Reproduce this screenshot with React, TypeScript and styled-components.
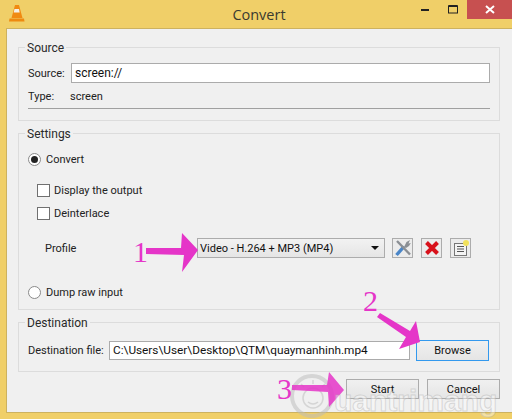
import React from "react";
import styled, { createGlobalStyle } from "styled-components";

const Global = createGlobalStyle`
  html, body { margin: 0; padding: 0; background: #f0f0f0; }
  body { width: 512px; height: 419px; overflow: hidden; font-family: Roboto, "Open Sans", sans-serif; font-size: 11px; color: #222; }
`;
const Win = styled.div`
  position: relative; width: 512px; height: 419px; background: #f0cf68; overflow: hidden; box-sizing: border-box;
  display: flex; flex-direction: column;
`;
const TitleBar = styled.div`
  height: 28px; flex: none; position: relative; display: flex; align-items: center; justify-content: center;
  font-family: "Open Sans", sans-serif; font-size: 14.5px; color: #3a3a30; padding-left: 6px; box-sizing: border-box;
`;
const TitleIcon = styled.svg`position: absolute; left: 9px; top: 4px; width: 16px; height: 18px;`;
const WinButtons = styled.div`position: absolute; right: 0; top: 0; display: flex; align-items: flex-start;`;
const WinBtn = styled.div`
  width: ${p => p.$w}px; height: 19px; display: flex; align-items: center; justify-content: center;
  background: ${p => p.$close ? "#c75050" : "transparent"};
`;
const Body = styled.div`
  margin-left: 6px; width: 506px; height: 385px; background: #f0f0f0; box-sizing: border-box;
  border-top: 1px solid #cdb25f; border-left: 1px solid #cdb25f; border-bottom: 1px solid #cdb25f;
  padding: 9px 12px 0 11px; display: flex; flex-direction: column;
`;
const Group = styled.fieldset`
  margin: 0; padding: 0; border: 1px solid #dcdcdc; height: ${p => p.$h}px; box-sizing: border-box; margin-bottom: ${p => p.$mb}px;
  position: relative; display: flex; flex-direction: column;
`;
const Legend = styled.legend`
  margin-left: 6px; padding: 2px 2px 0; font-size: 12px; line-height: 16px; color: #2a2a2a;
`;
const Row = styled.div`display: flex; align-items: center; height: ${p => p.$h || 20}px; padding-left: ${p => p.$pl || 9}px; margin-top: ${p => p.$mt || 0}px; padding-right: 9px;`;
const Label = styled.span`width: ${p => p.$w}px; flex: none; white-space: nowrap;`;
const Input = styled.div`
  flex: ${p => p.$w ? "none" : 1}; width: ${p => p.$w ? p.$w + "px" : "auto"}; height: ${p => p.$h || 20}px; background: #fff; border: 1px solid #ababab; box-sizing: border-box; padding-left: 3px;
  line-height: ${p => (p.$h || 20) - 2}px; font-size: ${p => p.$fs || 12}px; white-space: nowrap; overflow: hidden; color: #111;
`;
const Sep = styled.div`height: 1px; background: #a0a0a0; margin: 2px 9px 0 9px;`;
const Radio = styled.span`
  width: 11px; height: 11px; border-radius: 50%; border: 1px solid #8a8a8a; background: #fff; margin-right: 5px; flex: none; display: flex; align-items: center; justify-content: center;
  &::after { content: ""; display: ${p => p.$on ? "block" : "none"}; width: 7px; height: 7px; border-radius: 50%; background: #222; }
`;
const Check = styled.span`width: 11px; height: 11px; border: 1px solid #707070; background: #fff; margin-right: 4px; flex: none;`;
const Combo = styled.div`
  width: 188px; height: 20px; box-sizing: border-box; border: 1px solid #acacac; background: linear-gradient(#f2f2f2, #e5e5e5);
  display: flex; align-items: center; padding: 0 5px 0 2px; justify-content: space-between; color: #111; white-space: nowrap; flex: none;
`;
const Caret = styled.span`width: 0; height: 0; border-left: 4px solid transparent; border-right: 4px solid transparent; border-top: 4px solid #111;`;
const ToolBtn = styled.div`
  width: 21px; height: 20px; box-sizing: border-box; border: 1px solid #acacac; background: #ececec; margin-left: ${p => p.$ml}px; display: flex; align-items: center; justify-content: center; flex: none;
`;
const Btn = styled.div`
  width: 73px; height: ${p => p.$h || 21}px; box-sizing: border-box; border: 1px solid ${p => p.$focus ? "#3399ee" : "#acacac"}; background: linear-gradient(#f0f0f0, #e5e5e5);
  display: flex; align-items: center; justify-content: center; color: #111; flex: none; margin-left: ${p => p.$ml || 0}px;
`;
const Footer = styled.div`display: flex; justify-content: flex-end; margin-top: 7px;`;
const Overlay = styled.svg`position: absolute; left: 0; top: 0; width: 512px; height: 419px; pointer-events: none;`;
const Num = styled.span`
  position: absolute; left: ${p => p.$x}px; top: ${p => p.$y}px; font-family: "Liberation Serif", serif; font-size: 30px; line-height: 30px; color: #e535c8;
`;
const Mark = styled.span`
  position: absolute; left: 334px; top: 386px; font-family: "Liberation Sans", sans-serif; font-weight: 700; font-size: 30px; line-height: 30px;
  color: rgba(255,255,255,.4); -webkit-text-stroke: 1px rgba(170,170,170,.4); white-space: nowrap;
`;

export default function App() {
  return (
    <Win>
      <Global />
      <TitleBar>
        <TitleIcon viewBox="0 0 16 18">
          <path d="M6 1 L10 1 L13.5 14 L2.5 14Z" fill="#f08a12" />
          <path d="M5.5 5 L10 5 L10.7 8.5 L4.7 8.5Z" fill="#f5f0e6" />
          <path d="M0.5 14.5 H15 L15.5 17.5 H0Z" fill="#ee8a10" />
        </TitleIcon>
        Convert
        <WinButtons>
          <WinBtn $w={27}><svg width="9" height="3"><rect width="8" height="2" y="1" fill="#222" /></svg></WinBtn>
          <WinBtn $w={28}><svg width="11" height="9"><rect x=".5" y="1" width="9" height="7" fill="none" stroke="#222" /><rect x=".5" y="0" width="9" height="2" fill="#222" /></svg></WinBtn>
          <WinBtn $w={45} $close><svg width="10" height="9"><path d="M1 1 L9 8 M9 1 L1 8" stroke="#fff" strokeWidth="2" /></svg></WinBtn>
        </WinButtons>
      </TitleBar>
      <Body>
        <Group $h={83} $mb={3}>
          <Legend>Source</Legend>
          <Row $mt={7}><Label $w={43}>Source:</Label><Input>screen://</Input></Row>
          <Row $mt={3}><Label $w={42}>Type:</Label>screen</Row>
          <Sep />
        </Group>
        <Group $h={186} $mb={3}>
          <Legend>Settings</Legend>
          <Row $mt={7}><Radio $on />Convert</Row>
          <Row $mt={10} $pl={18} $h={23}><Check />Display the output</Row>
          <Row $pl={18} $h={23}><Check />Deinterlace</Row>
          <Row $mt={13} $pl={26}>
            <Label $w={152}>Profile</Label>
            <Combo>Video - H.264 + MP3 (MP4)<Caret /></Combo>
            <ToolBtn $ml={7}>
              <svg width="18" height="18" viewBox="0 0 18 18">
                <path d="M2.5 16 L10 7.5" stroke="#4a86c8" strokeWidth="3.4" />
                <path d="M3 2 L16 15.5" stroke="#8b8f94" strokeWidth="2.4" />
                <path d="M10 8 L12.5 3 L16 1 L14.5 4.5 L16.8 4 L15 7 L12 9Z" fill="#8b8f94" />
              </svg>
            </ToolBtn>
            <ToolBtn $ml={8}>
              <svg width="16" height="16" viewBox="0 0 16 16"><path d="M2.5 2.5 L13.5 13.5 M13.5 2.5 L2.5 13.5" stroke="#d8111b" strokeWidth="4" /></svg>
            </ToolBtn>
            <ToolBtn $ml={8}>
              <svg width="18" height="18" viewBox="0 0 18 18">
                <rect x="2.5" y="4.5" width="12" height="12" fill="#f4f4f4" stroke="#777" />
                <path d="M5 7.5 H12 M5 10 H12 M5 12.5 H12" stroke="#555" />
                <circle cx="14" cy="4" r="3" fill="#f2e25c" />
              </svg>
            </ToolBtn>
          </Row>
          <Row $mt={24}><Radio />Dump raw input</Row>
        </Group>
        <Group $h={59} $mb={0}>
          <Legend>Destination</Legend>
          <Row $mt={9} $h={21}>
            <Label $w={81}>Destination file:</Label>
            <Input $w={301} $h={19} $fs={11.8}>{"C:\\Users\\User\\Desktop\\QTM\\quaymanhinh.mp4"}</Input>
            <Btn $ml={6} $focus>Browse</Btn>
          </Row>
        </Group>
        <Footer>
          <Btn $h={20}>Start</Btn>
          <Btn $h={20} $ml={8}>Cancel</Btn>
        </Footer>
      </Body>
      <Overlay viewBox="0 0 512 419">
        <g fill="none" stroke="rgba(185,185,185,.5)">
          <circle cx="312" cy="396" r="20" strokeWidth="4" />
          <circle cx="313" cy="398" r="10" strokeWidth="1.5" />
          <path d="M313 384 V380 M304 387 L301 384 M322 387 L325 384 M308 402 Q313 406 318 402" strokeWidth="1.5" />
        </g>
        <g fill="#e535c8">
          <path d="M146 248 H181 L182 233 L198 250 L182 272 L184 255 L146 254Z" />
          <path d="M377 317 L380 313 L410 331 L416 321 L420 342 L399 349 L406 337Z" />
          <path d="M292 385 H327 L329 372 L344 390 L329 407 L328 392 L292 390Z" opacity=".85" />
        </g>
      </Overlay>
      <Mark>uantrimang</Mark>
      <Num $x={133} $y={237}>1</Num>
      <Num $x={363} $y={286}>2</Num>
      <Num $x={277} $y={374}>3</Num>
    </Win>
  );
}
